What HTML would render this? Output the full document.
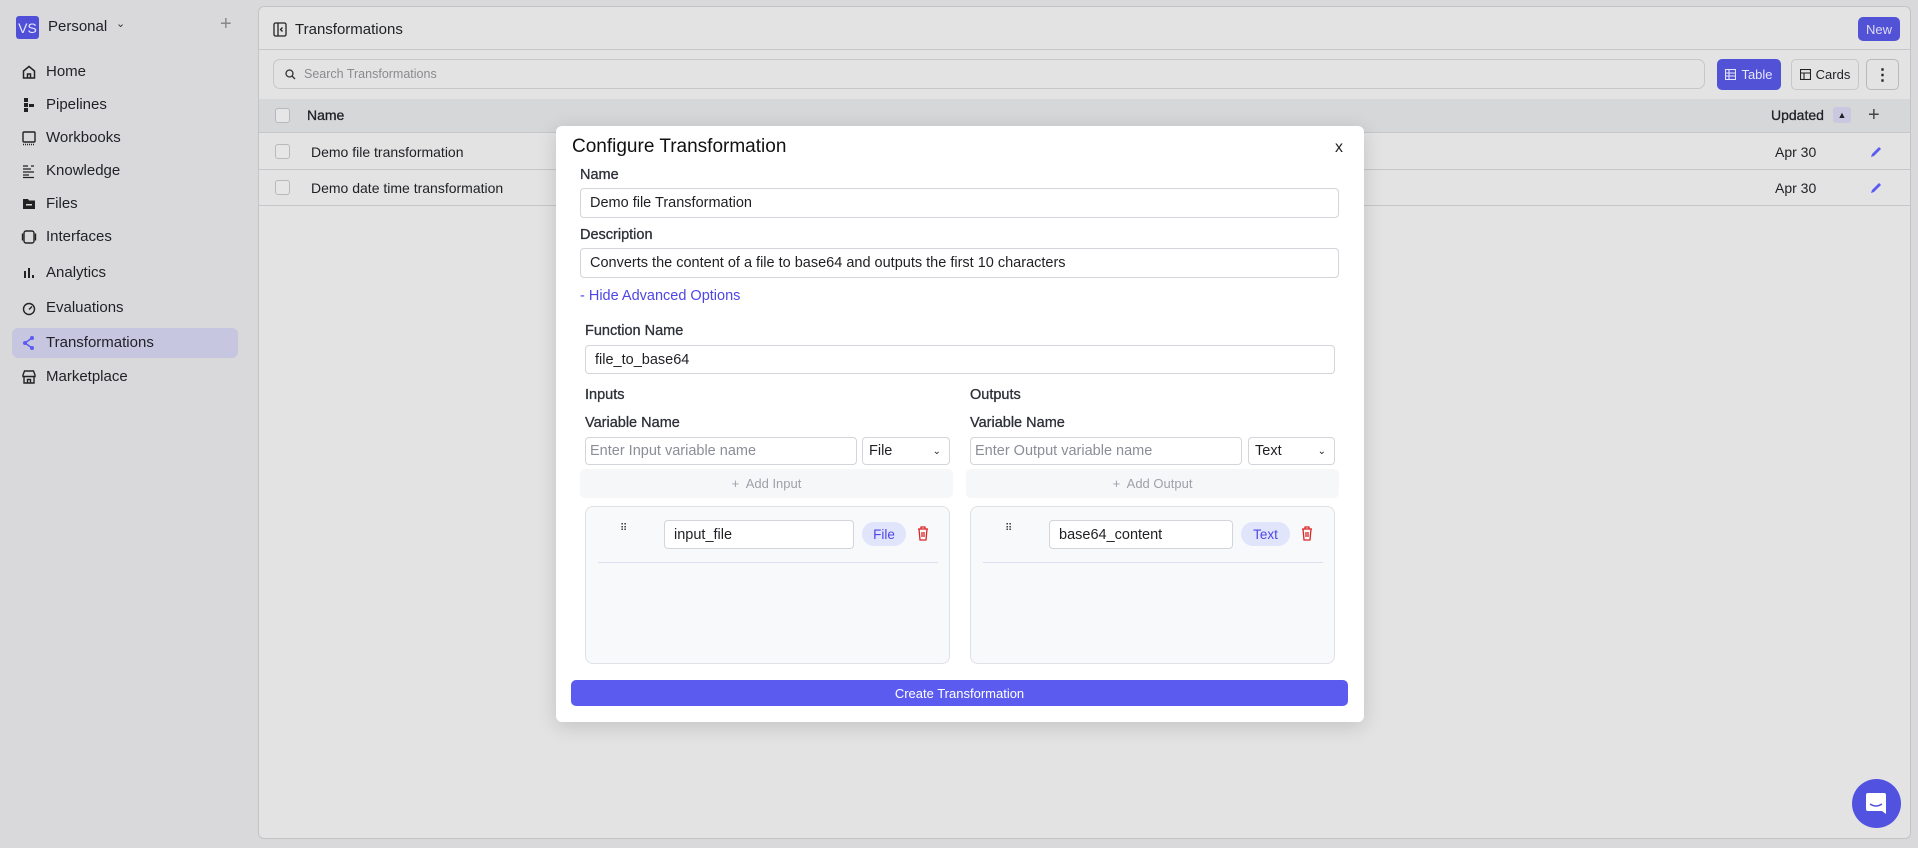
<!DOCTYPE html>
<html><head><meta charset="utf-8"><style>
*{box-sizing:border-box;margin:0;padding:0}
body{width:1918px;height:848px;overflow:hidden;background:#d9d9db;font-family:"Liberation Sans",sans-serif;color:#1f2024;position:relative}
.abs{position:absolute}
.side-item{position:absolute;left:21px;font-size:15px;color:#1f2125;display:flex;align-items:center;gap:9px}
.side-item svg{width:16px;height:16px}
.panel{position:absolute;left:258px;top:6px;width:1653px;height:833px;background:#e3e3e4;border:1px solid #c4c4c7;border-radius:6px;overflow:hidden}
.cb{position:absolute;width:15px;height:15px;border:1px solid #b8b9bd;border-radius:3px;background:#e6e6e7}
.modal{position:absolute;left:556px;top:126px;width:808px;height:596px;background:#fff;border-radius:6px;box-shadow:0 4px 20px rgba(0,0,0,.15)}
.lbl{position:absolute;font-size:14.5px;color:#2e3038;-webkit-text-stroke:0.3px #2e3038}
.inp{position:absolute;border:1px solid #d3d5db;border-radius:4px;background:#fff;font-size:14.5px;color:#1f2024;padding-left:9px;display:flex;align-items:center}
.ph{color:#8b8e97}
.add{position:absolute;background:#f6f7f9;border-radius:5px;color:#9ea1aa;font-size:13px;display:flex;align-items:center;justify-content:center}
.list{position:absolute;background:#f8f9fb;border:1px solid #dfe1e6;border-radius:8px}
.pill{position:absolute;background:#e0e5fc;color:#4f46e5;border-radius:12px;font-size:13.5px;display:flex;align-items:center;justify-content:center}
</style></head><body>
<!-- sidebar -->
<div class="abs" style="left:16px;top:16px;width:23px;height:23px;background:#4f4fd8;border-radius:3px;color:#e8e8ff;font-size:14px;display:flex;align-items:center;justify-content:center">VS</div>
<div class="abs" style="left:48px;top:18px;font-size:15px;color:#1f2125">Personal</div>
<div class="abs" style="left:116px;top:17px;font-size:11px;color:#333">⌄</div>
<div class="abs" style="left:220px;top:13px;font-size:20px;color:#888">+</div>
<div class="abs" style="left:12px;top:328px;width:226px;height:30px;background:#c7c6e1;border-radius:6px"></div>
<div class="side-item" style="top:63px"><svg viewBox="0 0 16 16" fill="none" stroke="#222" stroke-width="1.5"><path d="M2.5 7L8 2.5 13.5 7V14H2.5Z M6.5 14V10h3v4"/></svg>Home</div>
<div class="side-item" style="top:96px"><svg viewBox="0 0 16 16" fill="#222"><rect x="3" y="1" width="4" height="4"/><rect x="3" y="6" width="4" height="4"/><rect x="3" y="11" width="4" height="4"/><rect x="8" y="7" width="5" height="3"/></svg>Pipelines</div>
<div class="side-item" style="top:129px"><svg viewBox="0 0 16 16" fill="none" stroke="#222" stroke-width="1.4"><rect x="2" y="2" width="12" height="10" rx="1"/><path d="M2 14.5h12" stroke-dasharray="1 1"/></svg>Workbooks</div>
<div class="side-item" style="top:162px"><svg viewBox="0 0 16 16" fill="none" stroke="#222" stroke-width="1.3"><path d="M2 3h5M2 6h8M2 9h11M2 12h6M2 14.5h11M10 3h3"/></svg>Knowledge</div>
<div class="side-item" style="top:195px"><svg viewBox="0 0 16 16" fill="#222"><path d="M2 3h5l1 1.5h6V13H2Z"/><rect x="5" y="8" width="6" height="1.5" fill="#d9d9db"/></svg>Files</div>
<div class="side-item" style="top:228px"><svg viewBox="0 0 16 16" fill="none" stroke="#222" stroke-width="1.4"><rect x="3" y="2" width="10" height="12" rx="2"/><path d="M1.5 4.5v7M14.5 4.5v7"/></svg>Interfaces</div>
<div class="side-item" style="top:264px"><svg viewBox="0 0 16 16" fill="#222"><rect x="3" y="6" width="2" height="7"/><rect x="7" y="3" width="2" height="10"/><rect x="11" y="10" width="2" height="3"/></svg>Analytics</div>
<div class="side-item" style="top:299px"><svg viewBox="0 0 16 16" fill="none" stroke="#222" stroke-width="1.4"><circle cx="8" cy="9" r="5.5"/><path d="M8 9.5l3-3"/></svg>Evaluations</div>
<div class="side-item" style="top:334px"><svg viewBox="0 0 16 16" fill="#5b5bef"><circle cx="4" cy="8" r="2"/><circle cx="11" cy="3" r="2"/><circle cx="11" cy="13" r="2"/><path d="M4 8L11 3M4 8l7 5" stroke="#5b5bef" stroke-width="1.5"/></svg>Transformations</div>
<div class="side-item" style="top:368px"><svg viewBox="0 0 16 16" fill="none" stroke="#222" stroke-width="1.4"><path d="M2 6l1.5-4h9L14 6v1.5H2Z M3 7.5V14h10V7.5 M6.5 14v-3.5h3V14"/></svg>Marketplace</div>

<!-- main panel -->
<div class="panel">
 <svg class="abs" style="left:14px;top:15px" width="14" height="15" viewBox="0 0 14 15" fill="none" stroke="#222" stroke-width="1.3"><rect x="1" y="1" width="12" height="13" rx="1.5"/><path d="M5 1v13M9.5 5.5L7.5 7.5l2 2"/></svg>
 <div class="abs" style="left:36px;top:14px;font-size:15px;color:#1f2125">Transformations</div>
 <div class="abs" style="left:1599px;top:10px;width:42px;height:24px;background:#5252d6;border-radius:5px;color:#dcdcf5;font-size:13px;display:flex;align-items:center;justify-content:center">New</div>
 <div class="abs" style="left:0;top:42px;width:100%;height:1px;background:#c8c8cb"></div>
 <div class="abs" style="left:14px;top:52px;width:1432px;height:30px;border:1px solid #c6c7ca;border-radius:7px"></div>
 <svg class="abs" style="left:26px;top:62px" width="11" height="11" viewBox="0 0 11 11" fill="none" stroke="#333" stroke-width="1.3"><circle cx="4.5" cy="4.5" r="3.5"/><path d="M7 7l3 3"/></svg>
 <div class="abs" style="left:45px;top:60px;font-size:12.5px;color:#8a8b90">Search Transformations</div>
 <div class="abs" style="left:1458px;top:52px;width:64px;height:31px;background:#5252d6;border-radius:5px;color:#e5e5fa;font-size:13px;display:flex;align-items:center;justify-content:center;gap:5px"><svg width="11" height="11" viewBox="0 0 11 11" fill="none" stroke="#e5e5fa" stroke-width="1.1"><rect x=".5" y=".5" width="10" height="10"/><path d="M.5 4h10M.5 7h10M4 .5v10"/></svg>Table</div>
 <div class="abs" style="left:1532px;top:52px;width:68px;height:31px;border:1px solid #c6c7ca;border-radius:5px;font-size:13px;display:flex;align-items:center;justify-content:center;gap:5px"><svg width="11" height="11" viewBox="0 0 11 11" fill="none" stroke="#222" stroke-width="1.1"><rect x=".5" y=".5" width="10" height="10"/><path d="M.5 4h10M4 4v6.5"/></svg>Cards</div>
 <div class="abs" style="left:1607px;top:52px;width:33px;height:31px;border:1px solid #b8b9bd;border-radius:5px;display:flex;align-items:center;justify-content:center;font-size:16px;font-weight:bold">⋮</div>
 <div class="abs" style="left:0;top:92px;width:100%;height:34px;background:#d6d7d9;border-bottom:1px solid #c6c7ca"></div>
 <div class="cb" style="left:16px;top:101px"></div>
 <div class="abs" style="left:48px;top:100px;font-size:14px;-webkit-text-stroke:0.3px #1f2024">Name</div>
 <div class="abs" style="left:1512px;top:100px;font-size:14px;-webkit-text-stroke:0.3px #1f2024">Updated</div>
 <div class="abs" style="left:1574px;top:100px;width:18px;height:16px;background:#c9c8e0;border-radius:3px;font-size:9px;text-align:center;line-height:16px">▲</div>
 <div class="abs" style="left:1609px;top:97px;font-size:20px;color:#444">+</div>
 <div class="abs" style="left:0;top:162px;width:100%;height:1px;background:#c6c7ca"></div>
 <div class="abs" style="left:0;top:198px;width:100%;height:1px;background:#c6c7ca"></div>
 <div class="cb" style="left:16px;top:137px"></div>
 <div class="cb" style="left:16px;top:173px"></div>
 <div class="abs" style="left:52px;top:137px;font-size:14px">Demo file transformation</div>
 <div class="abs" style="left:52px;top:173px;font-size:14px">Demo date time transformation</div>
 <div class="abs" style="left:1516px;top:137px;font-size:14px">Apr 30</div>
 <div class="abs" style="left:1516px;top:173px;font-size:14px">Apr 30</div>
 <svg class="abs" style="left:1611px;top:139px" width="12" height="12" viewBox="0 0 12 12"><path d="M1 11l1-3 7-7 2 2-7 7Z" fill="#5b5bef"/></svg>
 <svg class="abs" style="left:1611px;top:175px" width="12" height="12" viewBox="0 0 12 12"><path d="M1 11l1-3 7-7 2 2-7 7Z" fill="#5b5bef"/></svg>
</div>

<!-- chat bubble -->
<div class="abs" style="left:1852px;top:779px;width:49px;height:49px;border-radius:50%;background:#5252e0"></div>
<svg class="abs" style="left:1865px;top:792px" width="22" height="23" viewBox="0 0 22 23"><path d="M3 1h16a2 2 0 0 1 2 2v19l-4-3H3a2 2 0 0 1-2-2V3a2 2 0 0 1 2-2Z" fill="#fff"/><path d="M5 12q6 4 12 0" stroke="#5252e0" stroke-width="1.5" fill="none"/></svg>

<!-- modal -->
<div class="modal">
 <div class="abs" style="left:16px;top:10px;font-size:19px;color:#111">Configure Transformation</div>
 <div class="abs" style="left:779px;top:13px;font-size:16px;color:#222">x</div>
 <div class="lbl" style="left:24px;top:41px">Name</div>
 <div class="inp" style="left:24px;top:62px;width:759px;height:30px">Demo file Transformation</div>
 <div class="lbl" style="left:24px;top:101px">Description</div>
 <div class="inp" style="left:24px;top:122px;width:759px;height:30px">Converts the content of a file to base64 and outputs the first 10 characters</div>
 <div class="abs" style="left:24px;top:162px;font-size:14.5px;color:#4f46e5">- Hide Advanced Options</div>
 <div class="lbl" style="left:29px;top:197px">Function Name</div>
 <div class="inp" style="left:29px;top:219px;width:750px;height:29px">file_to_base64</div>
 <div class="lbl" style="left:29px;top:261px">Inputs</div>
 <div class="lbl" style="left:414px;top:261px">Outputs</div>
 <div class="lbl" style="left:29px;top:289px">Variable Name</div>
 <div class="lbl" style="left:414px;top:289px">Variable Name</div>
 <div class="inp ph" style="left:29px;top:311px;width:272px;height:28px;padding-left:4px">Enter Input variable name</div>
 <div class="inp" style="left:306px;top:311px;width:88px;height:28px;padding-left:6px">File<span style="position:absolute;right:8px;font-size:10px">⌄</span></div>
 <div class="inp ph" style="left:414px;top:311px;width:272px;height:28px;padding-left:4px">Enter Output variable name</div>
 <div class="inp" style="left:692px;top:311px;width:87px;height:28px;padding-left:6px">Text<span style="position:absolute;right:8px;font-size:10px">⌄</span></div>
 <div class="add" style="left:24px;top:343px;width:373px;height:29px">+&nbsp; Add Input</div>
 <div class="add" style="left:410px;top:343px;width:373px;height:29px">+&nbsp; Add Output</div>
 <div class="list" style="left:29px;top:380px;width:365px;height:158px">
  <div class="abs" style="left:34px;top:20px;font-size:10px;line-height:4px;color:#333">⠿</div>
  <div class="inp" style="left:78px;top:13px;width:190px;height:29px">input_file</div>
  <div class="pill" style="left:276px;top:15px;width:44px;height:24px">File</div>
  <svg class="abs" style="left:331px;top:19px" width="12" height="15" viewBox="0 0 12 15" fill="none" stroke="#dc2626" stroke-width="1.3"><path d="M1 3h10M4 3V1h4v2M2 3l1 11h6l1-11M5 6v5M7 6v5"/></svg>
  <div class="abs" style="left:12px;top:55px;width:340px;height:1px;background:#dcdff0"></div>
 </div>
 <div class="list" style="left:414px;top:380px;width:365px;height:158px">
  <div class="abs" style="left:34px;top:20px;font-size:10px;line-height:4px;color:#333">⠿</div>
  <div class="inp" style="left:78px;top:13px;width:184px;height:29px">base64_content</div>
  <div class="pill" style="left:270px;top:15px;width:49px;height:24px">Text</div>
  <svg class="abs" style="left:330px;top:19px" width="12" height="15" viewBox="0 0 12 15" fill="none" stroke="#dc2626" stroke-width="1.3"><path d="M1 3h10M4 3V1h4v2M2 3l1 11h6l1-11M5 6v5M7 6v5"/></svg>
  <div class="abs" style="left:12px;top:55px;width:340px;height:1px;background:#dcdff0"></div>
 </div>
 <div class="abs" style="left:15px;top:554px;width:777px;height:26px;background:#5b5bef;border-radius:5px;color:#fff;font-size:13px;display:flex;align-items:center;justify-content:center">Create Transformation</div>
</div>
</body></html>
